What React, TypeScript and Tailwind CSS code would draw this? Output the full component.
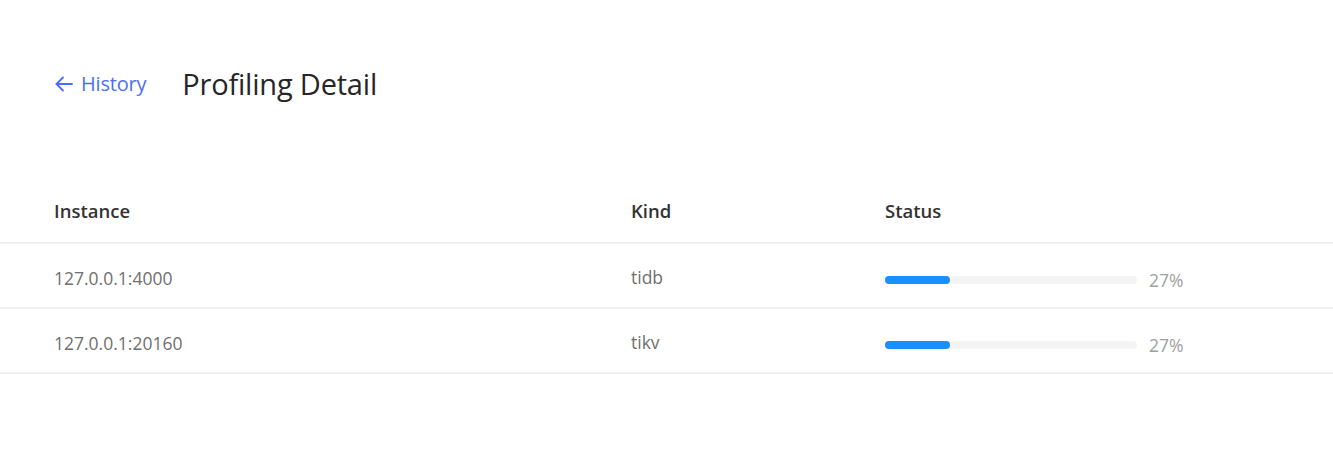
import { ReactElement } from "react";

const rows = [
    { instance: "127.0.0.1:4000", kind: "tidb", progress: 27 },
    { instance: "127.0.0.1:20160", kind: "tikv", progress: 27 },
];

const ArrowLeft = () => (
    <svg width="20" height="20" viewBox="0 0 20 20" fill="none" stroke="currentColor" strokeWidth="1.8" strokeLinecap="round" strokeLinejoin="round">
        <path d="M18 10H2.5" />
        <path d="M9 3.5L2.5 10L9 16.5" />
    </svg>
);

const App = (): ReactElement => {
    return (
        <div className="min-h-screen bg-white font-['Open_Sans','Noto_Sans',sans-serif]">
            <div className="flex items-center px-[54px] pt-[64px]">
                <a className="flex items-center gap-[7px] text-[#4c6ef5] text-[20px] leading-[40px] cursor-pointer">
                    <ArrowLeft />
                    <span className="tracking-[-0.2px]">History</span>
                </a>
                <h1 className="ml-[36px] text-[29px] leading-[40px] text-[#262626] tracking-[-0.2px]">Profiling Detail</h1>
            </div>

            <div className="mt-[74px]">
                <div className="grid grid-cols-[631px_254px_1fr] h-[66px] items-center border-b-2 border-[#efefef] text-[#333] text-[18.5px] font-semibold">
                    <div className="pl-[54px] mt-[2px]">Instance</div>
                    <div className="mt-[2px]">Kind</div>
                    <div className="mt-[2px]">Status</div>
                </div>
                {rows.map((r) => (
                    <div key={r.instance} className="grid grid-cols-[631px_254px_1fr] h-[65px] items-center border-b-2 border-[#efefef] text-[#6f6f6f] text-[17.5px]">
                        <div className="pl-[54px] mt-[6px]">{r.instance}</div>
                        <div className="mt-[4px]">{r.kind}</div>
                        <div className="flex items-center mt-[8px]">
                            <div className="w-[252px] h-[8px] rounded-full bg-[#f4f4f4]">
                                <div className="h-full rounded-full bg-[#1890ff]" style={{ width: `${r.progress * 0.96}%` }} />
                            </div>
                            <span className="ml-[12px] text-[#a0a0a0] text-[17.5px] mt-[2px]">{r.progress}%</span>
                        </div>
                    </div>
                ))}
            </div>
        </div>
    );
};

export default App;
